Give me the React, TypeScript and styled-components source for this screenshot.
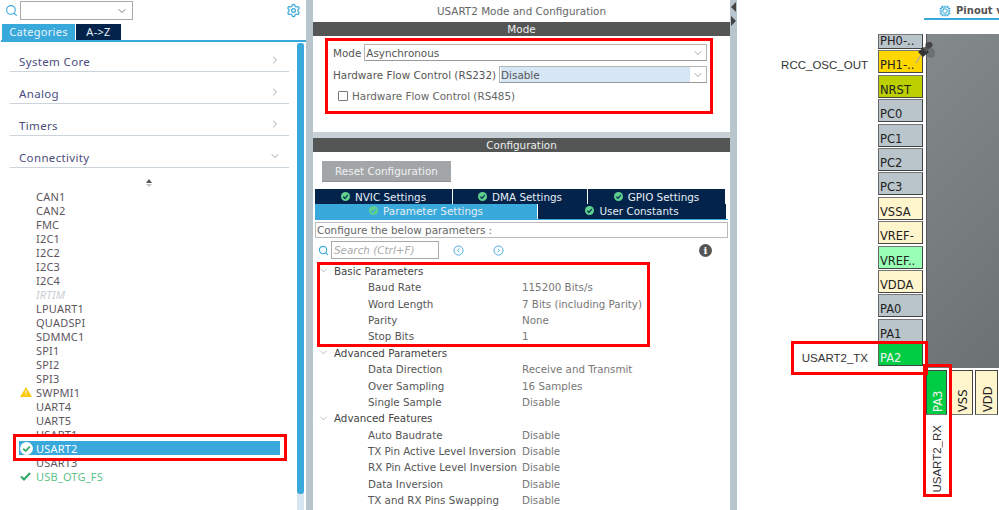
import React from 'react';
import styled, {createGlobalStyle} from 'styled-components';
import {ChevronDown, ChevronRight, Cpu, Search, Settings} from 'lucide-react';

const Global = createGlobalStyle`
html, body { margin: 0; padding: 0; background: #fff; }
body { font-family: "DejaVu Sans", sans-serif; font-size: 10.4px; }
`
const Page = styled.div`
display: flex;
width: 999px;
height: 510px;
overflow: hidden;
background: #fff;
`
const Band = styled.div`
flex: none;
width: 7px;
background: #b9c5cc;
display: flex;
flex-direction: column;
align-items: center;
gap: 4px;
padding-top: 2px;
box-sizing: border-box;
`
const Arrow = styled.span<{$dir: 'left' | 'right'}>`
width: 0;
height: 0;
border-top: 5px solid transparent;
border-bottom: 5px solid transparent;
${p => p.$dir === 'left' ? 'border-right: 5px solid #444;' : 'border-left: 5px solid #444;'}
`
const RedBox = styled.div<{$top: number; $left: number; $w: number; $h: number}>`
position: absolute;
top: ${p => p.$top}px;
left: ${p => p.$left}px;
width: ${p => p.$w}px;
height: ${p => p.$h}px;
box-sizing: border-box;
border: 3px solid #f00;
pointer-events: none;
z-index: 3;
`

/* left pane */
const LeftPane = styled.div`
flex: none;
width: 306px;
display: flex;
flex-direction: column;
`
const TopRow = styled.div`
height: 24px;
display: flex;
align-items: flex-start;
padding: 1px 4px 0 5px;
box-sizing: border-box;
color: #39a9dc;
`
const Combo = styled.div`
width: 113px;
height: 19px;
margin-left: 2px;
box-sizing: border-box;
border: 1px solid #a9a9a9;
display: flex;
align-items: center;
justify-content: flex-end;
padding-right: 4px;
color: #777;
background: #fff;
margin-right: auto;
`
const Tabs = styled.div`
display: flex;
gap: 1px;
padding-left: 2px;
height: 16px;
`
const Tab = styled.div<{$active?: boolean}>`
width: ${p => p.$active ? 73 : 45}px;
background: ${p => p.$active ? '#39a9dc' : '#03234b'};
color: #e8f3fa;
font-family: "Noto Sans", sans-serif;
letter-spacing: .3px;
font-size: 11px;
line-height: 16px;
text-align: center;
`
const BlueLine = styled.div`
height: 2px;
margin-left: 1px;
background: #39a9dc;
`
const LeftBody = styled.div`
flex: 1;
display: flex;
min-height: 0;
`
const Tree = styled.div`
flex: 1;
min-width: 0;
font-family: "Noto Sans", sans-serif;
`
const Track = styled.div`
flex: none;
width: 7px;
margin: 1px 2px 0 0;
background: #d8e6f2;
`
const Thumb = styled.div`
height: 451px;
background: #39a9dc;
border-radius: 3px;
`
const CatRow = styled.div`
height: 32px;
margin: 0 8px 0 10px;
box-sizing: border-box;
border-bottom: 1px solid #ccd5dc;
display: flex;
align-items: flex-end;
justify-content: space-between;
padding: 0 8px 1px 9px;
color: #4a4c7e;
font-size: 11.5px;
letter-spacing: .35px;
line-height: 16px;
&:first-child { height: 30px; }
svg { color: #666; margin-bottom: 4px; }
`
const SortIcon = styled.div`
height: 21px;
display: flex;
flex-direction: column;
align-items: center;
justify-content: flex-end;
gap: 1px;
padding: 0 0 2px 0;
box-sizing: border-box;
`
const Tri = styled.span<{$up?: boolean}>`
width: 0;
height: 0;
border-left: 3px solid transparent;
border-right: 3px solid transparent;
${p => p.$up ? 'border-bottom: 4px solid #555;' : 'border-top: 3px solid #c4c4c4;'}
`
const List = styled.div`
display: flex;
flex-direction: column;
`
const Item = styled.div<{$disabled?: boolean; $ok?: boolean}>`
height: 14px;
display: flex;
align-items: center;
padding-left: 20px;
font-size: 11px;
letter-spacing: .2px;
color: ${p => p.$disabled ? '#c6ced4' : p.$ok ? '#5cc48a' : '#5b5660'};
font-style: ${p => p.$disabled ? 'italic' : 'normal'};
`
const Slot = styled.span`
width: 16px;
flex: none;
display: flex;
align-items: center;
`
const SelectedWrap = styled.div`
position: relative;
height: 14px;
margin: 0 13px 0 0;
z-index: 2;
`
const SelectedHalo = styled.div`
position: absolute;
inset: -7px -3px -6px 13px;
background: #fff;
border: 3px solid #f00;
box-sizing: border-box;
`
const SelectedRow = styled.div`
position: absolute;
inset: 0 4px 0 19px;
background: #39a9dc;
color: #fff;
display: flex;
align-items: center;
padding-left: 1px;
font-size: 11px;
letter-spacing: .2px;
`

/* middle pane */
const MidPane = styled.div`
flex: none;
width: 417px;
display: flex;
flex-direction: column;
color: #555;
`
const Title = styled.div`
height: 22px;
line-height: 23px;
text-align: center;
color: #666;
`
const BarHead = styled.div`
height: 14px;
line-height: 14px;
background: #535654;
color: #eee;
text-align: center;
`
const ModeBody = styled.div`
height: 96px;
padding: 8px 23px 0 20px;
box-sizing: border-box;
display: flex;
flex-direction: column;
`
const FieldRow = styled.div`
display: flex;
align-items: center;
gap: 3px;
height: 17px;
margin-bottom: 5px;
white-space: nowrap;
`
const Select = styled.div`
flex: 1;
height: 17px;
box-sizing: border-box;
border: 1px solid #b5b5b5;
border-bottom-color: #999;
display: flex;
align-items: center;
justify-content: space-between;
padding: 0 0 0 1px;
color: #555;
background: #fff;
`
const SelectText = styled.span<{$hi?: boolean}>`
flex: 1;
height: 100%;
display: flex;
align-items: center;
background: ${p => p.$hi ? '#d6e6f5' : 'transparent'};
`
const SelectBtn = styled.span`
width: 16px;
display: flex;
justify-content: center;
color: #666;
`
const CheckRow = styled.div`
display: flex;
align-items: center;
gap: 4px;
padding-left: 5px;
margin-top: 2px;
color: #666;
`
const CheckBox = styled.span`
width: 10px;
height: 10px;
box-sizing: border-box;
border: 1px solid #777;
border-radius: 1px;
`
const GreyBand = styled.div`
height: 6px;
background: #c6d0d6;
`
const ResetRow = styled.div`
height: 37px;
padding: 9px 0 0 9px;
box-sizing: border-box;
`
const ResetBtn = styled.div`
width: 129px;
height: 21px;
line-height: 20px;
background: #a2a6a9;
border-bottom: 1px solid #8b8f92;
box-sizing: border-box;
color: #f1f1f1;
text-align: center;
`
const SetTabs = styled.div`
display: flex;
flex-direction: column;
margin: 0 2px;
`
const SetRow = styled.div`
display: flex;
gap: 1px;
height: 15px;
& + & > div { padding-bottom: 2px; box-sizing: border-box; }
`
const SetTab = styled.div<{$active?: boolean; $w: number}>`
width: ${p => p.$w}px;
background: ${p => p.$active ? '#39a9dc' : '#03234b'};
color: #e6eef4;
display: flex;
align-items: center;
justify-content: center;
gap: 5px;
`
const SetLine = styled.div`
height: 1px;
margin: 0 2px;
background: #39a9dc;
`
const ConfigText = styled.div`
height: 16px;
line-height: 14px;
margin: 2px 2px 0;
border: 1px solid #bbb;
box-sizing: border-box;
padding-left: 1px;
color: #666;
`
const SearchRow = styled.div`
height: 22px;
margin-top: 1px;
display: flex;
align-items: center;
padding: 0 18px 0 5px;
color: #39a9dc;
`
const SearchInput = styled.div`
width: 108px;
height: 18px;
line-height: 16px;
margin-left: 2px;
border: 1px solid #aaa;
box-sizing: border-box;
padding-left: 2px;
color: #aaa;
font-style: italic;
`
const NavBtn = styled.svg<{$gap: number}>`
margin-left: ${p => p.$gap}px;
`
const InfoDot = styled.span`
margin-left: auto;
width: 13px;
height: 13px;
border-radius: 50%;
background: #555;
color: #fff;
font: bold 10px/13px "DejaVu Serif", serif;
text-align: center;
`
const ParamList = styled.div`
padding: 1.6px 0 0 5px;
display: flex;
flex-direction: column;
font-size: 10.3px;
`
const GroupRow = styled.div`
height: 16.4px;
line-height: 16.4px;
display: flex;
align-items: center;
color: #444;
svg { color: #888; width: 11px; margin-right: 5px; }
`
const ParamRow = styled.div`
height: 16.4px;
display: flex;
align-items: center;
padding-left: 50px;
white-space: nowrap;
`
const ParamName = styled.span`
width: 154px;
flex: none;
color: #555;
`
const ParamValue = styled.span`
color: #777;
`

/* pinout pane */
const RightPane = styled.div`
flex: 1;
min-width: 0;
display: flex;
flex-direction: column;
`
const PinoutBar = styled.div`
height: 34px;
flex: none;
display: flex;
justify-content: flex-end;
`
const PinoutTab = styled.div`
width: 75px;
height: 20px;
box-sizing: border-box;
border-bottom: 2px solid #39a9dc;
display: flex;
align-items: center;
gap: 5px;
padding: 3px 0 0 15px;
color: #555;
font-weight: bold;
font-size: 10px;
white-space: nowrap;
overflow: hidden;
svg { color: #39a9dc; flex: none; }
`
const Canvas = styled.div`
display: flex;
`
const PinCol = styled.div`
width: 186px;
flex: none;
display: flex;
flex-direction: column;
gap: 1.4px;
`
const PinLine = styled.div`
display: flex;
align-items: center;
justify-content: flex-end;
`
const PinLabel = styled.span`
font: 11.5px "Liberation Sans", sans-serif;
color: #333;
margin: 7px 10px 0 0;
`
const Pin = styled.div<{$bg: string; $h?: number; $light?: boolean}>`
width: 45px;
height: ${p => p.$h ?? 23}px;
box-sizing: border-box;
background: ${p => p.$bg};
border: 1px solid #444;
border-top-color: #777;
border-left-color: #666;
color: ${p => p.$light ? '#f2f2f2' : '#222'};
padding: 0 0 0 1px;
font-size: 11.5px;
display: flex;
align-items: flex-end;
white-space: nowrap;
overflow: hidden;
`
const ChipCol = styled.div`
flex: none;
margin-left: 3px;
width: 75px;
`
const Chip = styled.div`
height: 334px;
background: linear-gradient(135deg, #84898b, #6c7173);
border-left: 1px solid #555;
`
const BottomPins = styled.div`
display: flex;
gap: 2px;
margin-top: 2px;
`
const BottomCell = styled.div`
display: flex;
flex-direction: column;
align-items: center;
margin-right: 1px;
`
const VPin = styled.div<{$bg: string; $light?: boolean; $wide?: boolean}>`
width: ${p => p.$wide ? 23 : 21}px;
flex: none;
height: 45px;
box-sizing: border-box;
background: ${p => p.$bg};
border: 1px solid #444;
border-top-color: #777;
color: ${p => p.$light ? '#f2f2f2' : '#222'};
writing-mode: vertical-rl;
transform: rotate(180deg);
display: flex;
align-items: center;
justify-content: flex-start;
padding: 2px 3px 0 0;
font-size: 11.5px;
`
const VLabel = styled.span`
margin-top: 10px;
writing-mode: vertical-rl;
transform: rotate(180deg);
font: 11.5px "Liberation Sans", sans-serif;
color: #333;
`
const PinWrap = styled.div`
position: absolute;
left: 914px;
top: 41px;
z-index: 2;
`
const Root = styled.div`
position: relative;
width: 999px;
height: 510px;
`

const CheckBadge = ({size = 9, fill = '#5fd08e', tick = '#03234b'}: {size?: number; fill?: string; tick?: string}) =>
  <svg width={size} height={size} viewBox="0 0 12 12">
    <circle cx="6" cy="6" r="6" fill={fill}/>
    <path d="M3 6.2l2.2 2.2L9 4.2" fill="none" stroke={tick} strokeWidth="1.6"/>
  </svg>

const items = ['CAN1', 'CAN2', 'FMC', 'I2C1', 'I2C2', 'I2C3', 'I2C4', 'IRTIM', 'LPUART1', 'QUADSPI', 'SDMMC1', 'SPI1', 'SPI2', 'SPI3', 'SWPMI1', 'UART4', 'UART5', 'USART1']

const groups = [
  {name: 'Basic Parameters', rows: [['Baud Rate', '115200 Bits/s'], ['Word Length', '7 Bits (including Parity)'], ['Parity', 'None'], ['Stop Bits', '1']]},
  {name: 'Advanced Parameters', rows: [['Data Direction', 'Receive and Transmit'], ['Over Sampling', '16 Samples'], ['Single Sample', 'Disable']]},
  {name: 'Advanced Features', rows: [['Auto Baudrate', 'Disable'], ['TX Pin Active Level Inversion', 'Disable'], ['RX Pin Active Level Inversion', 'Disable'], ['Data Inversion', 'Disable'], ['TX and RX Pins Swapping', 'Disable']]},
]

const grey = '#b9c4cb'
const cream = '#fff5cc'
const pins: {name: string; bg: string; h?: number; label?: string; light?: boolean}[] = [
  {name: 'PH0-..', bg: grey, h: 15},
  {name: 'PH1-..', bg: '#ffd700', label: 'RCC_OSC_OUT'},
  {name: 'NRST', bg: '#bccf00'},
  {name: 'PC0', bg: grey},
  {name: 'PC1', bg: grey},
  {name: 'PC2', bg: grey},
  {name: 'PC3', bg: grey},
  {name: 'VSSA', bg: cream},
  {name: 'VREF-', bg: cream},
  {name: 'VREF..', bg: '#98ffb4'},
  {name: 'VDDA', bg: cream},
  {name: 'PA0', bg: grey},
  {name: 'PA1', bg: grey},
  {name: 'PA2', bg: '#00cc44', label: 'USART2_TX', light: true},
]

function App() {
  return (
    <Root>
      <Global/>
      <Page>
        <LeftPane>
          <TopRow>
            <Search size={13} strokeWidth={2} style={{marginTop: 3}}/>
            <Combo><ChevronDown size={12}/></Combo>
            <Settings size={15} style={{marginTop: 2, marginRight: 1}}/>
          </TopRow>
          <Tabs>
            <Tab $active>Categories</Tab>
            <Tab>A-&gt;Z</Tab>
          </Tabs>
          <BlueLine/>
          <LeftBody>
            <Tree>
              <CatRow>System Core<ChevronRight size={12} strokeWidth={1.2}/></CatRow>
              <CatRow>Analog<ChevronRight size={12} strokeWidth={1.2}/></CatRow>
              <CatRow>Timers<ChevronRight size={12} strokeWidth={1.2}/></CatRow>
              <CatRow>Connectivity<ChevronDown size={12} strokeWidth={1.2}/></CatRow>
              <SortIcon><Tri $up/><Tri/></SortIcon>
              <List>
                {items.map(name =>
                  <Item key={name} $disabled={name === 'IRTIM'}>
                    <Slot>
                      {name === 'SWPMI1' &&
                        <svg width="12" height="10" viewBox="0 0 12 10"><path d="M6 0l6 10H0z" fill="#ffc90e"/><path d="M6 3v3.5M6 7.6v1" stroke="#fff" strokeWidth="1"/></svg>}
                    </Slot>
                    {name}
                  </Item>
                )}
                <SelectedWrap>
                  <SelectedHalo/>
                  <SelectedRow>
                    <Slot><CheckBadge size={13} fill="#fff" tick="#2ea866"/></Slot>
                    USART2
                  </SelectedRow>
                </SelectedWrap>
                <Item><Slot/>USART3</Item>
                <Item $ok>
                  <Slot><svg width="11" height="9" viewBox="0 0 11 9"><path d="M1 4.5l3 3L10 1" fill="none" stroke="#2ea866" strokeWidth="2"/></svg></Slot>
                  USB_OTG_FS
                </Item>
              </List>
            </Tree>
            <Track><Thumb/></Track>
          </LeftBody>
        </LeftPane>
        <Band/>
        <MidPane>
          <Title>USART2 Mode and Configuration</Title>
          <BarHead>Mode</BarHead>
          <ModeBody>
            <FieldRow>
              Mode
              <Select><SelectText>Asynchronous</SelectText><SelectBtn><ChevronDown size={12} strokeWidth={1.2}/></SelectBtn></Select>
            </FieldRow>
            <FieldRow>
              Hardware Flow Control (RS232)
              <Select><SelectText $hi>Disable</SelectText><SelectBtn><ChevronDown size={12} strokeWidth={1.2}/></SelectBtn></Select>
            </FieldRow>
            <CheckRow><CheckBox/>Hardware Flow Control (RS485)</CheckRow>
          </ModeBody>
          <GreyBand/>
          <BarHead>Configuration</BarHead>
          <ResetRow><ResetBtn>Reset Configuration</ResetBtn></ResetRow>
          <SetTabs>
            <SetRow>
              <SetTab $w={137}><CheckBadge/>NVIC Settings</SetTab>
              <SetTab $w={134}><CheckBadge/>DMA Settings</SetTab>
              <SetTab $w={137}><CheckBadge/>GPIO Settings</SetTab>
            </SetRow>
            <SetRow>
              <SetTab $active $w={222}><CheckBadge tick="#39a9dc"/>Parameter Settings</SetTab>
              <SetTab $w={188}><CheckBadge/>User Constants</SetTab>
            </SetRow>
          </SetTabs>
          <SetLine/>
          <ConfigText>Configure the below parameters :</ConfigText>
          <SearchRow>
            <Search size={11} strokeWidth={2.4}/>
            <SearchInput>Search (Ctrl+F)</SearchInput>
            <NavBtn $gap={14} width="11" height="11" viewBox="0 0 24 24" fill="none" stroke="currentColor" strokeWidth="2"><circle cx="12" cy="12" r="10"/><path d="M14 8l-4 4 4 4"/></NavBtn>
            <NavBtn $gap={29} width="11" height="11" viewBox="0 0 24 24" fill="none" stroke="currentColor" strokeWidth="2"><circle cx="12" cy="12" r="10"/><path d="M10 8l4 4-4 4"/></NavBtn>
            <InfoDot>i</InfoDot>
          </SearchRow>
          <ParamList>
            {groups.map(g =>
              <React.Fragment key={g.name}>
                <GroupRow><ChevronDown size={11} strokeWidth={1.2}/>{g.name}</GroupRow>
                {g.rows.map(r =>
                  <ParamRow key={r[0]}>
                    <ParamName>{r[0]}</ParamName>
                    <ParamValue>{r[1]}</ParamValue>
                  </ParamRow>
                )}
              </React.Fragment>
            )}
          </ParamList>
        </MidPane>
        <Band><Arrow $dir="left"/><Arrow $dir="right"/></Band>
        <RightPane>
          <PinoutBar>
            <PinoutTab><Cpu size={12}/>Pinout v</PinoutTab>
          </PinoutBar>
          <Canvas>
            <PinCol>
              {pins.map(p =>
                <PinLine key={p.name}>
                  {p.label && <PinLabel>{p.label}</PinLabel>}
                  <Pin $bg={p.bg} $h={p.h} $light={p.light}>{p.name}</Pin>
                </PinLine>
              )}
            </PinCol>
            <ChipCol>
              <Chip/>
              <BottomPins>
                <BottomCell>
                  <VPin $bg="#00cc44" $light>PA3</VPin>
                  <VLabel>USART2_RX</VLabel>
                </BottomCell>
                <VPin $bg={cream} $wide>VSS</VPin>
                <VPin $bg={cream} $wide>VDD</VPin>
              </BottomPins>
            </ChipCol>
          </Canvas>
        </RightPane>
      </Page>
      <PinWrap>
        <svg width="22" height="23" viewBox="0 0 22 23">
          <ellipse cx="17" cy="12" rx="4" ry="5" fill="#5e6365" opacity=".6"/>
          <path d="M2 22l5-8" stroke="#c4b27a" strokeWidth="1.6"/>
          <path d="M4 11l6-5 5 5-6 5z" fill="#333"/>
          <path d="M9 8l4-4 3 3-4 4z" fill="#555"/>
          <ellipse cx="15" cy="4" rx="3.6" ry="3" fill="#444"/>
        </svg>
      </PinWrap>
      <RedBox $top={38} $left={325} $w={388} $h={76}/>
      <RedBox $top={262} $left={317} $w={333} $h={85}/>
      <RedBox $top={341} $left={791} $w={137} $h={34}/>
      <RedBox $top={364} $left={923} $w={29} $h={133}/>
    </Root>
  )
}
export default App;
